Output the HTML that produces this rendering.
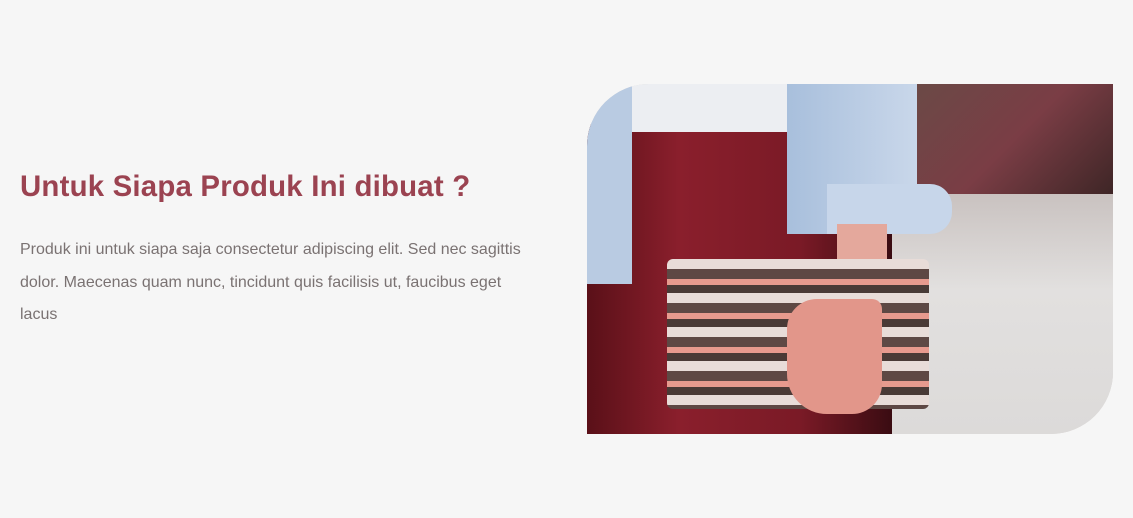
<!DOCTYPE html>
<html><head><meta charset="utf-8"><style>
body{margin:0;width:1133px;height:518px;background:#f6f6f6;overflow:hidden;font-family:"Liberation Sans",sans-serif;position:relative}
h1{position:absolute;left:20px;top:170px;margin:0;font-size:29.4px;font-weight:bold;color:#9b4351;letter-spacing:0.2px}
p{position:absolute;left:20px;top:234px;margin:0;width:520px;font-size:16px;line-height:32.5px;color:#7a7272}
.img{position:absolute;left:587px;top:84px;width:526px;height:350px;border-radius:62px 0 62px 0;overflow:hidden;background:#d8d4d2}
.img div{position:absolute}
</style></head><body>
<h1>Untuk Siapa Produk Ini dibuat ?</h1>
<p>Produk ini untuk siapa saja consectetur adipiscing elit. Sed nec sagittis dolor. Maecenas quam nunc, tincidunt quis facilisis ut, faucibus eget lacus</p>
<div class="img">
 <div style="left:320px;top:0;width:206px;height:120px;background:linear-gradient(135deg,#6a4a46,#7a3d45 50%,#3a2424)"></div>
 <div style="left:300px;top:110px;width:226px;height:240px;background:linear-gradient(180deg,#c9c2c0,#e2e0df 40%,#dcdad9)"></div>
 <div style="left:0;top:40px;width:305px;height:310px;background:linear-gradient(90deg,#5a1018,#8a1f2c 30%,#7a1a26 70%,#3a0c12)"></div>
 <div style="left:40px;top:0;width:170px;height:48px;background:#eceef2"></div>
 <div style="left:0;top:0;width:45px;height:200px;background:#b9cbe2"></div>
 <div style="left:200px;top:0;width:130px;height:150px;background:linear-gradient(90deg,#a8bfdc,#c9d7ea)"></div>
 <div style="left:240px;top:100px;width:125px;height:50px;background:#c7d6ea;border-radius:0 22px 22px 0"></div>
 <div style="left:250px;top:140px;width:50px;height:80px;background:#e4a89c"></div>
 <div style="left:80px;top:175px;width:262px;height:150px;background:repeating-linear-gradient(180deg,#e8dcd8 0 10px,#5e4844 10px 20px,#e79a8e 20px 26px,#4a3a36 26px 34px);border-radius:6px"></div>
 <div style="left:200px;top:215px;width:95px;height:115px;background:#e2968a;border-radius:30px 10px 30px 40px"></div>
</div>
</body></html>
